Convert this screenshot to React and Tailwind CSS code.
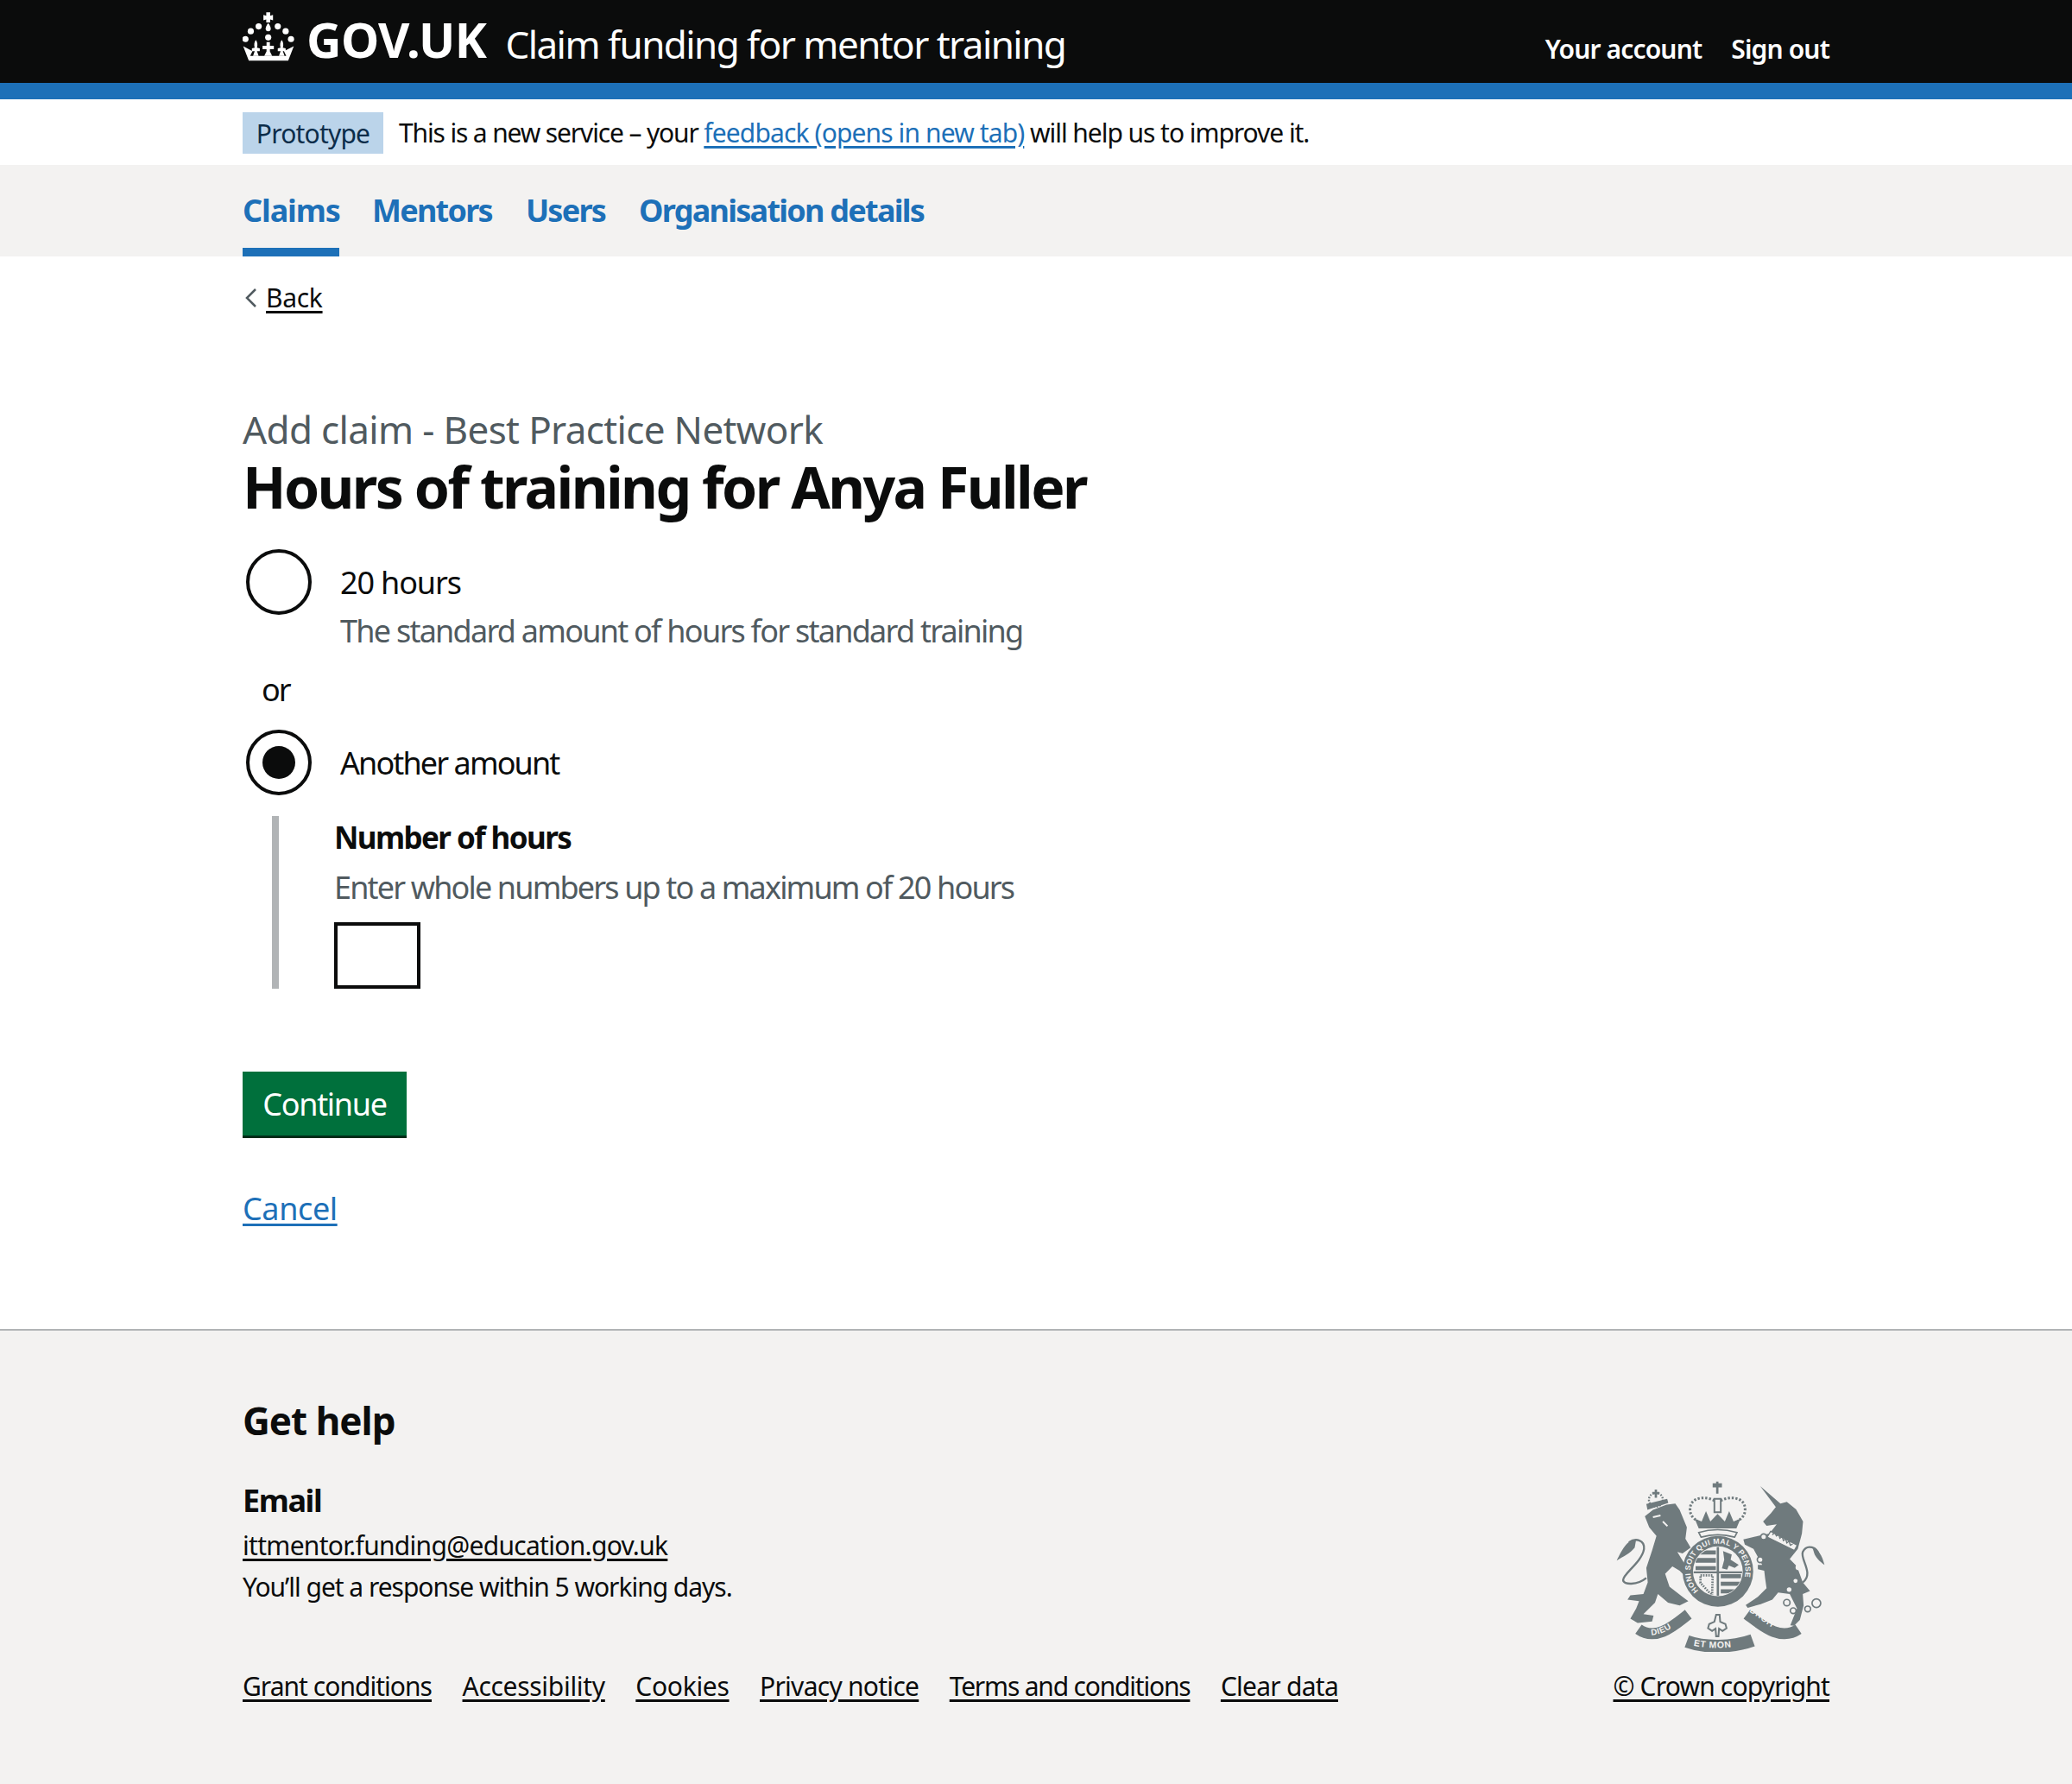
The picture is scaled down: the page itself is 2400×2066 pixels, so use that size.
import React from 'react';

const font = { fontFamily: '"Noto Sans", sans-serif' };
const bg = '#f3f2f1';
const grey = '#6f7a7d';

const Fleur = ({ x }) => (
  <path transform={`translate(${x} 0)`} d="M0 138c6 8 7 18 4 28l10 2v10H4l6 17h-20l6-17h-10v-10l10-2c-3-10-2-20 4-28z" />
);

const CrownLogo = () => (
  <svg width="60" height="58" viewBox="33 36 184 178" fill="#ffffff" aria-hidden="true">
    <circle cx="43" cy="135" r="11" />
    <circle cx="62" cy="107" r="11" />
    <circle cx="90" cy="90" r="11" />
    <circle cx="158" cy="90" r="11" />
    <circle cx="186" cy="107" r="11" />
    <circle cx="205" cy="135" r="11" />
    <circle cx="124" cy="129" r="11" />
    <path d="M117 40h14v12l10-3v19l-10-3v11h-14V65l-10 3V49l10 3z" />
    <path d="M124 78c6 8 9 14 9 20a9 9 0 0 1-18 0c0-6 3-12 9-20z" />
    <path d="M35 160l33 18-8 17h128l-8-17 35-18-20 52H55z" />
    <path d="M118 146h12v13h14v12h-14v8l8 16h-28l8-16v-8h-14v-12h14z" />
    <Fleur x={80} />
    <Fleur x={172} />
  </svg>
);

const Crest = () => (
  <svg width="247" height="198" viewBox="95 50 730 590" fill={grey} aria-hidden="true">
    <defs>
      <clipPath id="shield-clip">
        <circle cx="452" cy="362" r="84" />
      </clipPath>
      <path id="garter-arc" d="M385 429a95 95 0 1 1 134 0" />
      <path id="dieu-arc" d="M222 582C265 582 305 550 345 518" />
      <path id="droit-arc" d="M560 502C600 522 640 572 702 580" />
      <path id="etmon-arc" d="M368 618C420 630 485 630 538 616" />
    </defs>

    {/* lion */}
    <path d="M200 172l28-22 47-18 30-4 15 22 25 60-5 40 18 30-28 20-18-5 43 70-10 20-25-25-25-15-25 25 15 45 45 35 20 15-30 15-40-10-35-30-10 30-40 40 35 5-5 20-50 5-25-15 20-35 10-25-40-5 10-15 45-5 15-40-5-50 20-60 15-50-25-30z" />
    <path d="M205 385C175 410 125 410 125 392 125 370 190 330 197 285 200 255 170 245 145 262" fill="none" stroke={grey} strokeWidth="7" />
    <path d="M170 252C140 250 120 290 103 325 125 310 150 300 165 280z" />
    <path d="M228 175l26-6M262 190l16 16" fill="none" stroke={bg} strokeWidth="6" />
    <circle cx="238" cy="115" r="24" fill="none" stroke={grey} strokeWidth="7" strokeDasharray="5 5" />
    <path d="M205 130l72-18 4 14-72 24zM226 88h8v-8h8v8h8v8h-8v12h-8V96h-8z" />

    {/* unicorn */}
    <path d="M598 68l70 60 22-6 32 26 24 42-4 42-14 53-28 35 25 25 20 55 25 30-25 10 3 40-13 50-20 20-13-2 23-58-25-50-40-5-20 25-40 15-45 13-7-10 42-28 30-30-5-35-3-25-22-5v-15h15l-30-55-30-15-5-18 60-14 30-6 25-32-35 5-12-15 27-28 17-22z" />
    <path d="M745 400C785 370 735 320 745 295 760 265 795 280 800 305" fill="none" stroke={grey} strokeWidth="7" />
    <path d="M778 278c20 6 34 30 42 62-18-14-30-24-36-42z" />
    <path d="M634 224l92 48-10 18-94-46z" fill={bg} stroke={grey} strokeWidth="4" />
    <path d="M640 236l8-8 6 12 8-6 4 14 8-6 4 14 8-6 4 14 8-6 4 14 8-4" fill="none" stroke={grey} strokeWidth="4" />
    <circle cx="610" cy="243" r="10" fill={bg} stroke={grey} strokeWidth="5" />
    <circle cx="598" cy="322" r="10" fill={bg} stroke={grey} strokeWidth="5" />
    <circle cx="730" cy="348" r="10" fill={bg} />
    <circle cx="698" cy="425" r="8" fill={bg} />
    <circle cx="720" cy="395" r="7" fill={bg} />
    <circle cx="690" cy="470" r="11" fill={bg} stroke={grey} strokeWidth="5" />
    <circle cx="712" cy="498" r="10" fill={bg} stroke={grey} strokeWidth="5" />
    <circle cx="762" cy="492" r="10" fill={bg} stroke={grey} strokeWidth="5" />
    <circle cx="792" cy="472" r="15" fill={bg} stroke={grey} strokeWidth="5" />

    {/* crown */}
    <path d="M434 58h12v-6h8v6h12v14h-12v22h-8V72h-12z" />
    <path d="M440 112h22v46h-22z" fill="none" stroke={grey} strokeWidth="6" />
    <path d="M440 118c-30-16-84-14-84 30 0 22 14 34 26 40" fill="none" stroke={grey} strokeWidth="9" strokeDasharray="7 6" />
    <path d="M462 118c30-16 84-14 84 30 0 22-14 34-26 40" fill="none" stroke={grey} strokeWidth="9" strokeDasharray="7 6" />
    <path d="M372 180l24 10 15-36 15 36 25-26 25 26 15-36 15 36 24-10-14 34H386z" />
    <path d="M386 228c40-12 90-12 132 0l-8 16c-36-10-80-10-116 0z" fill="none" stroke={grey} strokeWidth="5" />

    {/* garter and shield */}
    <circle cx="452" cy="362" r="122" />
    <text fontFamily="Liberation Sans, sans-serif" fontSize="26" fontWeight="700" fill={bg} letterSpacing="1">
      <textPath href="#garter-arc">HONI SOIT QUI MAL Y PENSE</textPath>
    </text>
    <circle cx="452" cy="362" r="86" fill={bg} />
    <g clipPath="url(#shield-clip)">
      <path d="M375 290h70v14h-70zM375 316h70v16h-70zM375 344h70v14h-70z" />
      <path d="M470 292l30 12-4 18 28 18-14 10-20-8-6 14-18-4 8-30z" />
      <path d="M392 376l42 0-2 70-40-44z" fill="none" stroke={grey} strokeWidth="8" strokeDasharray="5 4" />
      <path d="M462 372h70v14h-70zM462 398h70v14h-70zM462 424h60v14h-60z" />
      <path d="M448 270h8v200h-8zM360 362h184v7H360z" />
    </g>

    {/* fleur and scroll */}
    <path d="M446 512h12l2 24 18 8 4 14-14 10-12-8-2 26h-8l-2-26-12 8-14-10 4-14 18-8z" fill="none" stroke={grey} strokeWidth="6" />
    <path d="M178 562C240 606 305 545 350 510" fill="none" stroke={grey} strokeWidth="38" />
    <path d="M730 562C665 606 600 545 552 510" fill="none" stroke={grey} strokeWidth="38" />
    <path d="M345 604C405 626 500 626 572 600" fill="none" stroke={grey} strokeWidth="44" />
    <text fontFamily="Liberation Sans, sans-serif" fontSize="31" fontWeight="700" fill={bg} letterSpacing="2">
      <textPath href="#etmon-arc">ET MON</textPath>
    </text>
    <text fontFamily="Liberation Sans, sans-serif" fontSize="29" fontWeight="700" fill={bg} letterSpacing="2">
      <textPath href="#dieu-arc">DIEU</textPath>
    </text>
    <text fontFamily="Liberation Sans, sans-serif" fontSize="29" fontWeight="700" fill={bg} letterSpacing="2">
      <textPath href="#droit-arc">DROIT</textPath>
    </text>
  </svg>
);

const Radio = ({ checked }) => (
  <span className="flex h-[76px] w-[76px] shrink-0 items-center justify-center rounded-full border-[4px] border-[#0b0c0c] bg-white">
    {checked && <span className="h-[38px] w-[38px] rounded-full bg-[#0b0c0c]" />}
  </span>
);

const navItems = ['Claims', 'Mentors', 'Users', 'Organisation details'];
const footerLinks = [
  { label: 'Grant conditions', tracking: 'tracking-[-0.97px]' },
  { label: 'Accessibility', tracking: 'tracking-[-0.3px]' },
  { label: 'Cookies', tracking: 'tracking-[-0.3px]' },
  { label: 'Privacy notice', tracking: 'tracking-[-0.73px]' },
  { label: 'Terms and conditions', tracking: 'tracking-[-1.2px]' },
  { label: 'Clear data', tracking: 'tracking-[-0.75px]' }
];

const App = () => {
  return (
    <div style={font} className="min-h-[2066px] bg-white text-[#0b0c0c]">
      <header className="h-[115px] border-b-[19px] border-[#1d70b8] bg-[#0b0c0c] text-white">
        <div className="mx-auto flex h-[96px] w-[1838px] items-start">
          <div className="pt-[13px]">
            <CrownLogo />
          </div>
          <span className="ml-[14px] pt-[12px] text-[56px] leading-[66px] font-bold tracking-[-0.6px]">GOV.UK</span>
          <span className="ml-[22px] pt-[21px] text-[44px] leading-[60px] tracking-[-1.55px]">Claim funding for mentor training</span>
          <div className="ml-auto flex gap-[34px] pt-[36px] text-[30px] leading-[42px] font-semibold tracking-[-0.85px]">
            <span>Your account</span>
            <span>Sign out</span>
          </div>
        </div>
      </header>

      <div className="h-[76px] bg-white">
        <div className="mx-auto flex w-[1838px] items-center pt-[15px]">
          <span className="flex h-[48px] w-[163px] items-center justify-center bg-[#bbd4ea] text-[30px] tracking-[-0.8px] text-[#0c2d4a]">Prototype</span>
          <p className="ml-[18px] text-[30px] leading-[48px] tracking-[-1.15px]">
            This is a new service – your <a className="text-[#1d70b8] underline underline-offset-4 tracking-[-0.88px]">feedback (opens in new tab)</a> <span className="tracking-[-1.05px]">will help us to improve it.</span>
          </p>
        </div>
      </div>

      <nav className="h-[106px] bg-[#f3f2f1]">
        <ul className="mx-auto flex h-full w-[1838px] gap-[39px]">
          {navItems.map((item, i) => (
            <li
              key={item}
              className={`pt-[30px] text-[36px] leading-[46px] font-bold text-[#1d70b8] ${i === 0 ? 'mr-[-1px] h-full w-[112px] border-b-[10px] border-[#1d70b8] tracking-[-1.1px]' : 'tracking-[-1.75px]'}`}
            >
              {item}
            </li>
          ))}
        </ul>
      </nav>

      <main className="mx-auto w-[1838px]">
        <a className="mt-[26px] flex w-fit items-center text-[30px] leading-[44px] tracking-[-0.3px]">
          <svg width="14" height="22" viewBox="0 0 14 22" className="ml-[3px] mr-[10px]" fill="none" stroke="#505a5f" strokeWidth="2.5" aria-hidden="true">
            <path d="M12 1L2 11l10 10" />
          </svg>
          <span className="underline underline-offset-4">Back</span>
        </a>

        <p className="mt-[100px] text-[44px] leading-[60px] tracking-[-0.65px] text-[#505a5f]">Add claim - Best Practice Network</p>
        <h1 className="mt-[-2px] text-[66px] leading-[76px] font-bold tracking-[-2.6px]">Hours of training for Anya Fuller</h1>

        <div className="mt-[35px] flex items-center">
          <span className="ml-[4px]"><Radio /></span>
          <span className="ml-[33px] translate-y-[1px] text-[36px] leading-[50px] tracking-[-1.15px]">20 hours</span>
        </div>
        <p className="mt-[-6px] ml-[113px] text-[36px] leading-[50px] tracking-[-1.75px] text-[#505a5f]">The standard amount of hours for standard training</p>

        <p className="mt-[18px] ml-[22px] text-[36px] leading-[50px] tracking-[-2px]">or</p>

        <div className="mt-[21px] flex items-center">
          <span className="ml-[4px]"><Radio checked /></span>
          <span className="ml-[33px] translate-y-[1px] text-[36px] leading-[50px] tracking-[-1.9px]">Another amount</span>
        </div>

        <div className="mt-[24px] ml-[34px] h-[200px] border-l-[8px] border-[#b1b4b6] pl-[64px]">
          <p className="text-[35px] leading-[50px] font-bold tracking-[-1.6px]">Number of hours</p>
          <p className="mt-[8px] text-[36px] leading-[50px] tracking-[-1.85px] text-[#505a5f]">Enter whole numbers up to a maximum of 20 hours</p>
          <input className="mt-[15px] block h-[77px] w-[100px] border-[4px] border-[#0b0c0c] bg-white" />
        </div>

        <button className="mt-[96px] block h-[74px] w-[190px] bg-[#00703c] pt-[2px] text-[36px] leading-[50px] tracking-[-1.3px] text-white shadow-[0_3px_0_#002d18]">Continue</button>

        <a className="mt-[60px] block w-fit text-[36px] leading-[50px] tracking-[-0.4px] text-[#1d70b8] underline underline-offset-4">Cancel</a>
      </main>

      <footer className="mt-[114px] h-[528px] border-t-[2px] border-[#b1b4b6] bg-[#f3f2f1]">
        <div className="mx-auto w-[1838px]">
          <h2 className="pt-[76px] text-[44px] leading-[56px] font-bold tracking-[-1px]">Get help</h2>
          <div className="flex items-end justify-between">
            <div>
              <p className="mt-[40px] text-[36px] leading-[50px] font-bold tracking-[-1.4px]">Email</p>
              <a className="mt-[5px] block text-[30px] leading-[44px] tracking-[-0.7px] underline underline-offset-4">ittmentor.funding@education.gov.uk</a>
              <p className="mt-[4px] text-[30px] leading-[44px] tracking-[-1.03px]">You’ll get a response within 5 working days.</p>
              <ul className="mt-[71px] flex gap-[35.5px] text-[30px] leading-[44px]">
                {footerLinks.map(link => (
                  <li key={link.label} className={`underline underline-offset-4 ${link.tracking}`}>{link.label}</li>
                ))}
              </ul>
            </div>
            <div className="flex flex-col items-end">
              <div className="mr-[3px]">
                <Crest />
              </div>
              <a className="mt-[18px] text-[30px] leading-[44px] tracking-[-0.83px] underline underline-offset-4">© Crown copyright</a>
            </div>
          </div>
        </div>
      </footer>
    </div>
  );
};

export default App;
